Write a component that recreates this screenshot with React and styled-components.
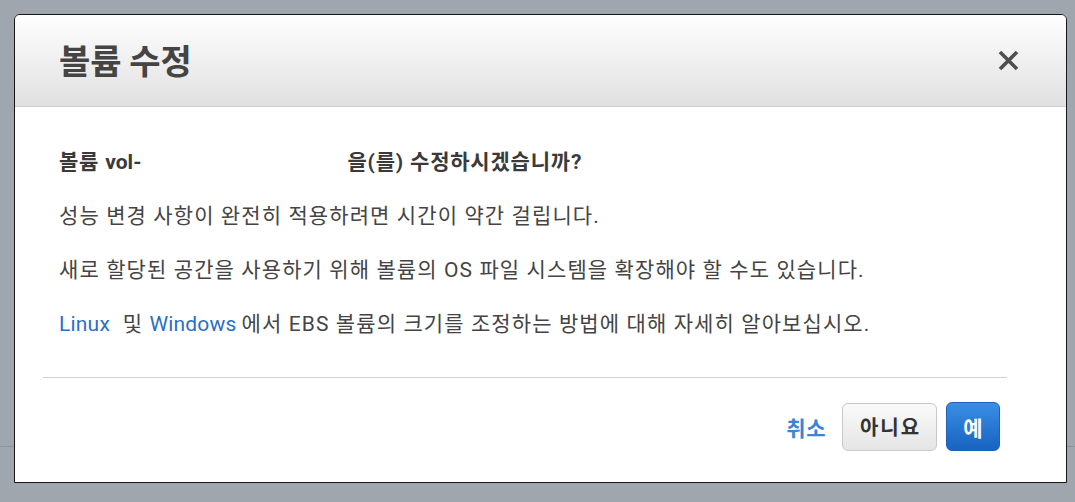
import React from 'react';
import styled, { createGlobalStyle } from 'styled-components';

const Global = createGlobalStyle`
  html, body {
    margin: 0;
    padding: 0;
  }
  body {
    font-family: Roboto, "Noto Sans CJK KR", sans-serif;
    color: #444;
  }
`;

const Backdrop = styled.div`
  width: 1075px;
  height: 502px;
  box-sizing: border-box;
  padding: 14px 0 0 14px;
  background:
    linear-gradient(to bottom, transparent 446px, #8e949a 446px, #8e949a 447px, transparent 447px),
    #a0a6ad;
`;

const Modal = styled.div`
  width: 1053px;
  height: 469px;
  box-sizing: border-box;
  border: 1px solid #161616;
  border-radius: 6px 6px 0 0;
  background: #fff;
  display: flex;
  flex-direction: column;
`;

const Header = styled.div`
  height: 92px;
  box-sizing: border-box;
  flex: none;
  border-bottom: 1px solid #cfcfcf;
  border-radius: 5px 5px 0 0;
  background: linear-gradient(to bottom, #ffffff, #e0e0e0);
  display: flex;
  align-items: center;
  justify-content: space-between;
  padding: 0 47px 3px 44px;
`;

const Title = styled.h1`
  margin: 0;
  font-size: 34px;
  font-weight: 700;
  color: #444;
  font-family: "Noto Sans CJK KR", sans-serif;
`;

const Close = styled.button`
  border: 0;
  padding: 0;
  margin-top: 3px;
  background: none;
  width: 21px;
  height: 21px;
  display: flex;
  cursor: pointer;
`;

const Content = styled.div`
  padding: 40px 59px 0 28px;
`;

const Text = styled.div`
  padding-left: 16px;
`;

const Para = styled.p`
  margin: 0 0 24px;
  font-size: 21px;
  line-height: 30px;
  letter-spacing: ${p => (p.$strong ? 0.8 : 1.1)}px;
  font-weight: ${p => (p.$strong ? 700 : 400)};
  color: ${p => (p.$strong ? '#3a3a3a' : '#444')};
  white-space: nowrap;
`;

const Latin = styled.span`
  letter-spacing: 0;
`;

const Redacted = styled.span`
  display: inline-block;
  width: 206px;
`;

const Link = styled.a`
  color: #2b6ec8;
  text-decoration: none;
  letter-spacing: 0.2px;
  margin-right: ${p => p.$gap || 0}px;
`;

const Divider = styled.hr`
  margin: 38px 0 0;
  border: 0;
  border-top: 1px solid #cfcfcf;
`;

const Footer = styled.div`
  display: flex;
  justify-content: flex-end;
  align-items: center;
  padding: 24px 7px 0 0;
`;

const Cancel = styled.a`
  color: #3a83d7;
  font-size: 21px;
  font-weight: 700;
  margin-right: 16px;
  text-decoration: none;
  letter-spacing: 0.5px;
`;

const Button = styled.button`
  font-family: "Noto Sans CJK KR", sans-serif;
  font-size: ${p => (p.$primary ? 21 : 20)}px;
  font-weight: 700;
  letter-spacing: ${p => (p.$primary ? 0 : 2)}px;
  height: ${p => (p.$primary ? 49 : 48)}px;
  width: ${p => (p.$primary ? 54 : 95)}px;
  margin-left: ${p => (p.$primary ? 9 : 0)}px;
  border-radius: 6px;
  padding: 0 0 0 ${p => (p.$primary ? 0 : 2)}px;
  color: ${p => (p.$primary ? '#fff' : '#333')};
  border: 1px solid ${p => (p.$primary ? '#1c62bb' : '#c9c9c9')};
  background: ${p =>
    p.$primary
      ? 'linear-gradient(to bottom, #3a8ee5, #1863c1)'
      : 'linear-gradient(to bottom, #fafafa, #e5e5e5)'};
`;

export default function App() {
  return (
    <>
      <Global />
      <Backdrop>
        <Modal>
          <Header>
            <Title>볼륨 수정</Title>
            <Close aria-label="닫기">
              <svg width="21" height="21" viewBox="0 0 21 21">
                <path d="M2 2 L19 19 M19 2 L2 19" stroke="#4e4e4e" strokeWidth="3.6" />
              </svg>
            </Close>
          </Header>
          <Content>
            <Text>
              <Para $strong>
                볼륨 <Latin>vol-</Latin><Redacted />을(를) 수정하시겠습니까?
              </Para>
              <Para>성능 변경 사항이 완전히 적용하려면 시간이 약간 걸립니다.</Para>
              <Para>새로 할당된 공간을 사용하기 위해 볼륨의 OS 파일 시스템을 확장해야 할 수도 있습니다.</Para>
              <Para>
                <Link href="#">Linux</Link>&nbsp; 및 <Link href="#" $gap={5}>Windows</Link>에서 EBS 볼륨의 크기를 조정하는 방법에 대해 자세히 알아보십시오.
              </Para>
            </Text>
            <Divider />
            <Footer>
              <Cancel href="#">취소</Cancel>
              <Button>아니요</Button>
              <Button $primary>예</Button>
            </Footer>
          </Content>
        </Modal>
      </Backdrop>
    </>
  );
}
